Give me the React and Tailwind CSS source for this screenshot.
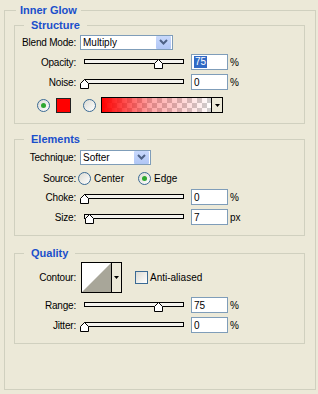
const Thumb = ({ pos }) => (
  <svg
    className="absolute top-0"
    style={{ left: pos - 4 }}
    width="9"
    height="10"
    viewBox="0 0 9 10"
  >
    <polygon points="4.5,0.5 8.5,4.5 8.5,9.5 0.5,9.5 0.5,4.5" fill="#fff" stroke="#000" />
  </svg>
);

const Slider = ({ pos }) => (
  <div className="relative ml-[8px] h-[10px] w-[100px] self-start mt-[5px]">
    <div className="h-[5px] w-full border border-black bg-[#f4f3ee]" />
    <Thumb pos={pos} />
  </div>
);

const NumBox = ({ value, selected, unit = "%" }) => (
  <>
    <div className="ml-[7px] flex h-[16px] w-[37px] items-center border border-[#7F9DB9] bg-white pl-[2px]">
      {selected ? (
        <span className="bg-[#316AC5] px-[1px] text-white leading-[12px]">{value}</span>
      ) : (
        <span>{value}</span>
      )}
    </div>
    <span className="ml-[2px]">{unit}</span>
  </>
);

const Label = ({ children }) => (
  <div className="w-[61px] shrink-0 text-right tracking-[-0.2px]">{children}</div>
);

const SliderRow = ({ label, pos, value, selected, unit, className }) => (
  <div className={"flex h-[16px] items-center " + className}>
    <Label>{label}</Label>
    <Slider pos={pos} />
    <NumBox value={value} selected={selected} unit={unit} />
  </div>
);

const Chevron = () => (
  <svg width="9" height="6" viewBox="0 0 9 6">
    <polyline points="1,1 4.5,4.5 8,1" fill="none" stroke="#4D6185" strokeWidth="2" />
  </svg>
);

const Combo = ({ value, width }) => (
  <div className={"ml-[4px] flex h-[15px] items-center border border-[#7F9DB9] bg-white " + width}>
    <span className="flex-1 pl-[2px]">{value}</span>
    <div className="m-[1px] flex h-[13px] w-[15px] items-center justify-center rounded-[1px] bg-gradient-to-b from-[#C9D9FC] to-[#B0C6F5]">
      <Chevron />
    </div>
  </div>
);

const DownTri = () => (
  <svg width="5" height="3" viewBox="0 0 5 3">
    <polygon points="0,0 5,0 2.5,3" fill="#000" />
  </svg>
);

const Radio = ({ checked, className = "" }) => (
  <div
    className={
      "flex h-[13px] w-[13px] shrink-0 items-center justify-center rounded-full border border-[#3A6A94] bg-gradient-to-br from-[#DCDBD3] to-white " +
      className
    }
  >
    {checked && <div className="h-[5px] w-[5px] rounded-full bg-[#2FA82F]" />}
  </div>
);

const Group = ({ title, className = "", children }) => (
  <fieldset className={"w-[291px] border border-[#D0D0BF] pb-[10px] " + className}>
    <legend className="ml-[9px] px-[7px] text-[11px] font-bold leading-[13px] text-[#1A4FCB]">
      {title}
    </legend>
    {children}
  </fieldset>
);

export default function App() {
  return (
    <div className="h-[394px] w-[318px] bg-[#ECE9D8] pl-[4px] pt-[4px] font-['Liberation_Sans',Arial,sans-serif] text-[10px] text-black">
      <fieldset className="h-[386px] w-[312px] border border-[#D0D0BF] pl-[9px] pr-[10px]">
        <legend className="ml-[2px] px-[4px] text-[11px] font-bold leading-[13px] text-[#1A4FCB]">
          Inner Glow
        </legend>

        <Group title="Structure" className="mt-[2px]">
          <div className="mt-[2px] flex h-[16px] items-center">
            <Label>Blend Mode:</Label>
            <Combo value="Multiply" width="w-[93px]" />
          </div>
          <SliderRow label="Opacity:" pos={74} value="75" selected className="mt-[4px]" />
          <SliderRow label="Noise:" pos={0} value="0" className="mt-[4px]" />
          <div className="mt-[7px] flex h-[16px] items-center">
            <Radio checked className="ml-[22px]" />
            <div className="ml-[6px] h-[15px] w-[15px] border border-[#222] bg-[#FF0000]" />
            <Radio className="ml-[12px]" />
            <div className="ml-[5px] flex h-[16px] w-[122px] border border-black">
              <div className="flex-1 bg-[linear-gradient(to_right,#ff0000,rgba(255,0,0,0.35)_45%,rgba(255,0,0,0)),repeating-conic-gradient(#cfcfcf_0_25%,#ffffff_0_50%)] bg-[length:100%_100%,10px_10px]" />
              <div className="flex w-[11px] items-center justify-center border-l border-black bg-[#ECE9D8]">
                <DownTri />
              </div>
            </div>
          </div>
        </Group>

        <Group title="Elements" className="mt-[9px] pb-[6px]">
          <div className="mt-[3px] flex h-[16px] items-center">
            <Label>Technique:</Label>
            <Combo value="Softer" width="w-[71px]" />
          </div>
          <div className="mt-[5px] flex h-[16px] items-center">
            <Label>Source:</Label>
            <Radio className="ml-[2px]" />
            <span className="ml-[3px] w-[44px]">Center</span>
            <Radio checked />
            <span className="ml-[3px]">Edge</span>
          </div>
          <SliderRow label="Choke:" pos={0} value="0" className="mt-[3px]" />
          <SliderRow label="Size:" pos={5} value="7" unit="px" className="mt-[4px]" />
        </Group>

        <Group title="Quality" className="mt-[11px] pb-[6px]">
          <div className="mt-[2px] flex h-[31px] items-center">
            <Label>Contour:</Label>
            <div className="ml-[5px] flex h-[31px] w-[41px] border border-black bg-white">
              <svg width="29" height="29" viewBox="0 0 29 29" className="shrink-0">
                <polygon points="0,29 29,0 29,29" fill="#A8A699" />
              </svg>
              <div className="flex flex-1 items-center justify-center border-l border-black bg-[#ECE9D8]">
                <DownTri />
              </div>
            </div>
            <div className="ml-[13px] h-[13px] w-[13px] border border-[#3A6A94] bg-gradient-to-br from-[#DCDBD3] to-white" />
            <span className="ml-[2px]">Anti-aliased</span>
          </div>
          <SliderRow label="Range:" pos={74} value="75" className="mt-[4px]" />
          <SliderRow label="Jitter:" pos={0} value="0" className="mt-[4px]" />
        </Group>
      </fieldset>
    </div>
  );
}
